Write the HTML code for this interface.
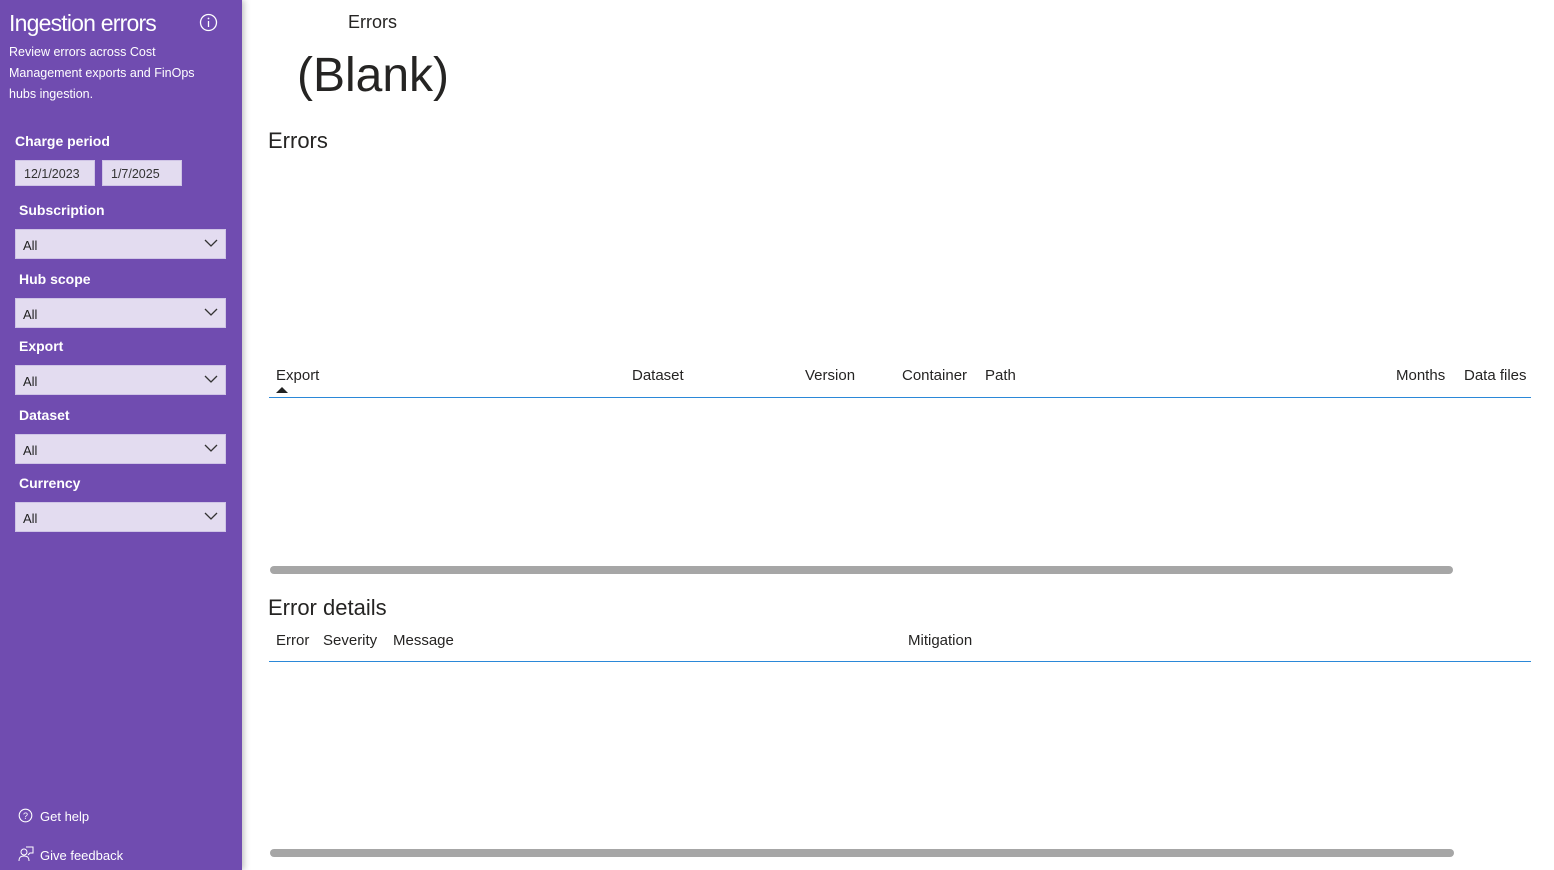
<!DOCTYPE html>
<html><head><style>
body{margin:0;width:1554px;height:870px;overflow:hidden;background:#fff;font-family:"Liberation Sans","DejaVu Sans",sans-serif;position:relative}
.a{position:absolute;white-space:nowrap}
#sb{position:absolute;left:0;top:0;width:242px;height:870px;background:#704cb0;box-shadow:2px 0 6px rgba(0,0,0,.25)}
.w{color:#fff}
.lbl{color:#fff;font-weight:bold;font-size:14px}
.dd{position:absolute;left:15px;width:211px;height:30px;background:#e3dcf0;border:1px solid #cfc4e6;box-sizing:border-box;font-size:13px;color:#222}
.dd span{position:absolute;left:7px;top:8px}
.dd svg{position:absolute;right:7px;top:9px}
.chev{position:absolute;right:18px}
.h{font-size:15px;color:#252423}
</style></head><body>
<div id="sb">
<div class="a w" style="left:9px;top:10px;font-size:23px;letter-spacing:-0.8px">Ingestion errors</div>
<svg class="a" style="left:199px;top:13px" width="19" height="19"><circle cx="9.5" cy="9.5" r="8" fill="none" stroke="#fff" stroke-width="1.3"/><line x1="9.5" y1="8" x2="9.5" y2="14" stroke="#fff" stroke-width="1.3"/><circle cx="9.5" cy="5.5" r="0.9" fill="#fff"/></svg>
<div class="a w" style="left:9px;top:42px;font-size:12.5px;line-height:21px;white-space:normal;width:200px">Review errors across Cost Management exports and FinOps hubs ingestion.</div>
<div class="a lbl" style="left:15px;top:133px">Charge period</div>
<div class="a" style="left:15px;top:160px;width:80px;height:26px;background:#e3dcf0;border:1px solid #cfc4e6;box-sizing:border-box;font-size:12.5px;color:#333;padding:6px 0 0 8px">12/1/2023</div>
<div class="a" style="left:102px;top:160px;width:80px;height:26px;background:#e3dcf0;border:1px solid #cfc4e6;box-sizing:border-box;font-size:12.5px;color:#333;padding:6px 0 0 8px">1/7/2025</div>
<div class="a lbl" style="left:19px;top:202px">Subscription</div>
<div class="dd" style="top:229px"><span>All</span><svg width="14" height="9"><path d="M1 1l6 6 6-6" fill="none" stroke="#333" stroke-width="1.3"/></svg></div>
<div class="a lbl" style="left:19px;top:271px">Hub scope</div>
<div class="dd" style="top:298px"><span>All</span><svg width="14" height="9"><path d="M1 1l6 6 6-6" fill="none" stroke="#333" stroke-width="1.3"/></svg></div>
<div class="a lbl" style="left:19px;top:338px">Export</div>
<div class="dd" style="top:365px"><span>All</span><svg width="14" height="9"><path d="M1 1l6 6 6-6" fill="none" stroke="#333" stroke-width="1.3"/></svg></div>
<div class="a lbl" style="left:19px;top:407px">Dataset</div>
<div class="dd" style="top:434px"><span>All</span><svg width="14" height="9"><path d="M1 1l6 6 6-6" fill="none" stroke="#333" stroke-width="1.3"/></svg></div>
<div class="a lbl" style="left:19px;top:475px">Currency</div>
<div class="dd" style="top:502px"><span>All</span><svg width="14" height="9"><path d="M1 1l6 6 6-6" fill="none" stroke="#333" stroke-width="1.3"/></svg></div>
<svg class="a" style="left:18px;top:808px" width="15" height="15"><circle cx="7.5" cy="7.5" r="6.3" fill="none" stroke="#fff" stroke-width="1.1"/><text x="7.5" y="11" font-size="9" fill="#fff" text-anchor="middle" font-family="Liberation Sans">?</text></svg>
<div class="a w" style="left:40px;top:809px;font-size:13px">Get help</div>
<svg class="a" style="left:18px;top:846px" width="16" height="16"><circle cx="6" cy="6" r="3" fill="none" stroke="#fff" stroke-width="1"/><path d="M1 15c0-4 2-5 5-5s5 1 5 5M8 1h7v6h-3l-2 2" fill="none" stroke="#fff" stroke-width="1"/></svg>
<div class="a w" style="left:40px;top:848px;font-size:13px">Give feedback</div>
</div>
<div class="a" style="left:348px;top:12px;font-size:18px;color:#252423">Errors</div>
<div class="a" style="left:297px;top:48px;font-size:48px;color:#252423">(Blank)</div>
<div class="a" style="left:268px;top:128px;font-size:22px;color:#252423">Errors</div>
<div class="a h" style="left:276px;top:367px">Export</div>
<svg class="a" style="left:276px;top:386px" width="12" height="7"><path d="M0 7L6 1 12 7z" fill="#222"/></svg>
<div class="a h" style="left:632px;top:367px">Dataset</div>
<div class="a h" style="left:805px;top:367px">Version</div>
<div class="a h" style="left:902px;top:367px">Container</div>
<div class="a h" style="left:985px;top:367px">Path</div>
<div class="a h" style="left:1396px;top:367px">Months</div>
<div class="a h" style="left:1464px;top:367px">Data files</div>
<div class="a" style="left:269px;top:397px;width:1262px;height:1px;background:#2b88d8"></div>
<div class="a" style="left:270px;top:566px;width:1183px;height:8px;border-radius:4px;background:#a6a6a6"></div>
<div class="a" style="left:268px;top:595px;font-size:22px;color:#252423">Error details</div>
<div class="a h" style="left:276px;top:632px">Error</div>
<div class="a h" style="left:323px;top:632px">Severity</div>
<div class="a h" style="left:393px;top:632px">Message</div>
<div class="a h" style="left:908px;top:632px">Mitigation</div>
<div class="a" style="left:269px;top:661px;width:1262px;height:1px;background:#2b88d8"></div>
<div class="a" style="left:270px;top:849px;width:1184px;height:8px;border-radius:4px;background:#a6a6a6"></div>
</body></html>
